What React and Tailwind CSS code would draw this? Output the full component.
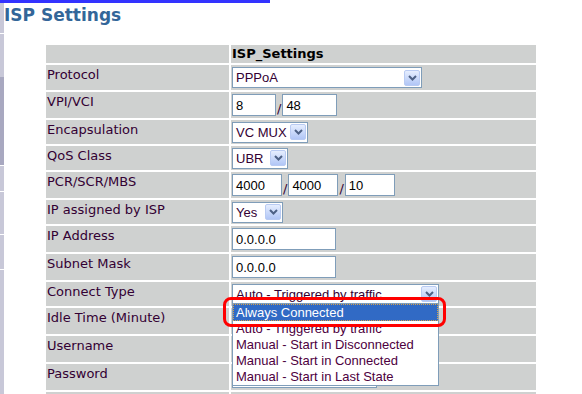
import React from 'react';

const labelFont = { fontFamily: '"DejaVu Sans", Verdana, sans-serif' };
const ctrlFont = { fontFamily: '"Liberation Sans", Arial, sans-serif' };

const Chevron = () => (
  <svg width="9" height="6" viewBox="0 0 9 6">
    <path d="M1 1 L4.5 4.5 L8 1" fill="none" stroke="#4d6185" strokeWidth="2" />
  </svg>
);

const DropButton = () => (
  <div className="ml-auto mr-[1px] flex h-[16px] w-[16px] shrink-0 items-center justify-center rounded-[2px] border border-[#b9cbf3] bg-gradient-to-b from-[#e6eefe] to-[#b1c6f6]">
    <Chevron />
  </div>
);

const Select = ({ value, width, children }) => (
  <div
    className="relative flex h-[21px] items-center border border-[#7f9db9] bg-white text-[13px] text-[#330033]"
    style={{ ...ctrlFont, width }}
  >
    <span className="pl-[3px] leading-[15px] whitespace-nowrap">{value}</span>
    <DropButton />
    {children}
  </div>
);

const Field = ({ value, width }) => (
  <div
    className="flex h-[22px] items-center border border-[#7f9db9] bg-white pl-[3px] text-[13px] leading-[15px] text-black"
    style={{ ...ctrlFont, width }}
  >
    {value}
  </div>
);

const Slash = () => (
  <span className="mx-[1px] text-[13px] leading-[15px] text-[#330033]" style={labelFont}>/</span>
);

const connectOptions = [
  'Auto - Triggered by traffic',
  'Manual - Start in Disconnected',
  'Manual - Start in Connected',
  'Manual - Start in Last State',
];

const DropList = () => (
  <div className="absolute left-[-1px] top-[18px] z-10 w-[207px] border border-[#7f9db9] bg-white text-[13px] leading-[16px]" style={ctrlFont}>
    <div className="h-[17px] border border-dotted border-[#d9a24a] bg-[#316ac5] pl-[2px] text-white">Always Connected</div>
    {connectOptions.map((o) => (
      <div key={o} className="h-[16px] pl-[3px] text-[#4d0040] whitespace-nowrap">{o}</div>
    ))}
  </div>
);

const rows = [
  { label: 'Protocol', h: 'h-[25px]', value: <Select value="PPPoA" width={190} /> },
  {
    label: 'VPI/VCI', h: 'h-[26px]',
    value: (
      <div className="flex items-end">
        <Field value="8" width={44} />
        <Slash />
        <Field value="48" width={55} />
      </div>
    ),
  },
  { label: 'Encapsulation', h: 'h-[24px]', value: <Select value="VC MUX" width={76} /> },
  { label: 'QoS Class', h: 'h-[24px]', value: <Select value="UBR" width={56} /> },
  {
    label: 'PCR/SCR/MBS', h: 'h-[26px]',
    value: (
      <div className="flex items-end">
        <Field value="4000" width={50} />
        <Slash />
        <Field value="4000" width={50} />
        <Slash />
        <Field value="10" width={50} />
      </div>
    ),
  },
  { label: 'IP assigned by ISP', h: 'h-[24px]', value: <Select value="Yes" width={51} /> },
  { label: 'IP Address', h: 'h-[26px]', value: <Field value="0.0.0.0" width={104} /> },
  { label: 'Subnet Mask', h: 'h-[26px]', value: <Field value="0.0.0.0" width={104} /> },
  {
    label: 'Connect Type', h: 'h-[24px]',
    value: (
      <Select value="Auto - Triggered by traffic" width={207}>
        <DropList />
      </Select>
    ),
  },
  { label: 'Idle Time (Minute)', h: 'h-[26px]', value: <Field value="" width={145} /> },
  { label: 'Username', h: 'h-[26px]', value: <Field value="" width={145} /> },
  { label: 'Password', h: 'h-[26px]', value: <Field value="" width={145} /> },
  { label: '', h: 'h-[26px]', value: <Field value="" width={145} /> },
];

export default function App() {
  return (
    <div className="relative flex h-[394px] w-[582px] flex-col overflow-hidden bg-white">
      <div className="h-[3px] w-[270px] shrink-0 bg-[#3333ff]" />
      <div className="flex flex-1">
        {/* left frame strip */}
        <div className="flex w-[4px] shrink-0 flex-col">
          <div className="h-[30px] bg-[#c8c8d8]" />
          <div className="h-[1px] bg-white" />
          <div className="h-[43px] bg-[#c8c8d8]" />
          <div className="h-[88px] bg-[#a8a8c0]" />
          <div className="h-[1px] bg-white" />
          <div className="h-[25px] bg-[#c8c8d8]" />
          <div className="h-[1px] bg-white" />
          <div className="h-[42px] bg-[#c8c8d8]" />
          <div className="h-[1px] bg-white" />
          <div className="h-[34px] bg-[#c8c8d8]" />
          <div className="h-[1px] bg-white" />
          <div className="flex-1 bg-[#c8c8d8]" />
        </div>

        <div className="flex-1">
          <h1 className="mt-[2px] pl-[0px] text-[17px] font-bold leading-[20px] text-[#336699]" style={labelFont}>
            ISP Settings
          </h1>

          <div className="ml-[42px] mt-[20px] grid grid-cols-[183px_305px] gap-[2px] text-[13px]" style={labelFont}>
            <div className="h-[18px] bg-[#cfd1d0]" />
            <div className="h-[18px] bg-[#cfd1d0] pl-[1px] pt-[1px] font-bold leading-[15px] text-black">ISP_Settings</div>
            {rows.map((r, i) => (
              <React.Fragment key={i}>
                <div className={`${r.h} bg-[#cfd1d0] pl-[1px] pt-[2px] leading-[15px] text-[#330033]`}>{r.label}</div>
                <div className={`${r.h} flex items-center bg-[#cfd1d0] pl-[1px]`}>{r.value}</div>
              </React.Fragment>
            ))}
          </div>
        </div>
      </div>

      {/* annotation around highlighted option */}
      <div className="pointer-events-none absolute left-[223px] top-[297px] z-20 h-[30px] w-[223px] rounded-[8px] border-[3px] border-[#ff0000]" />
    </div>
  );
}
